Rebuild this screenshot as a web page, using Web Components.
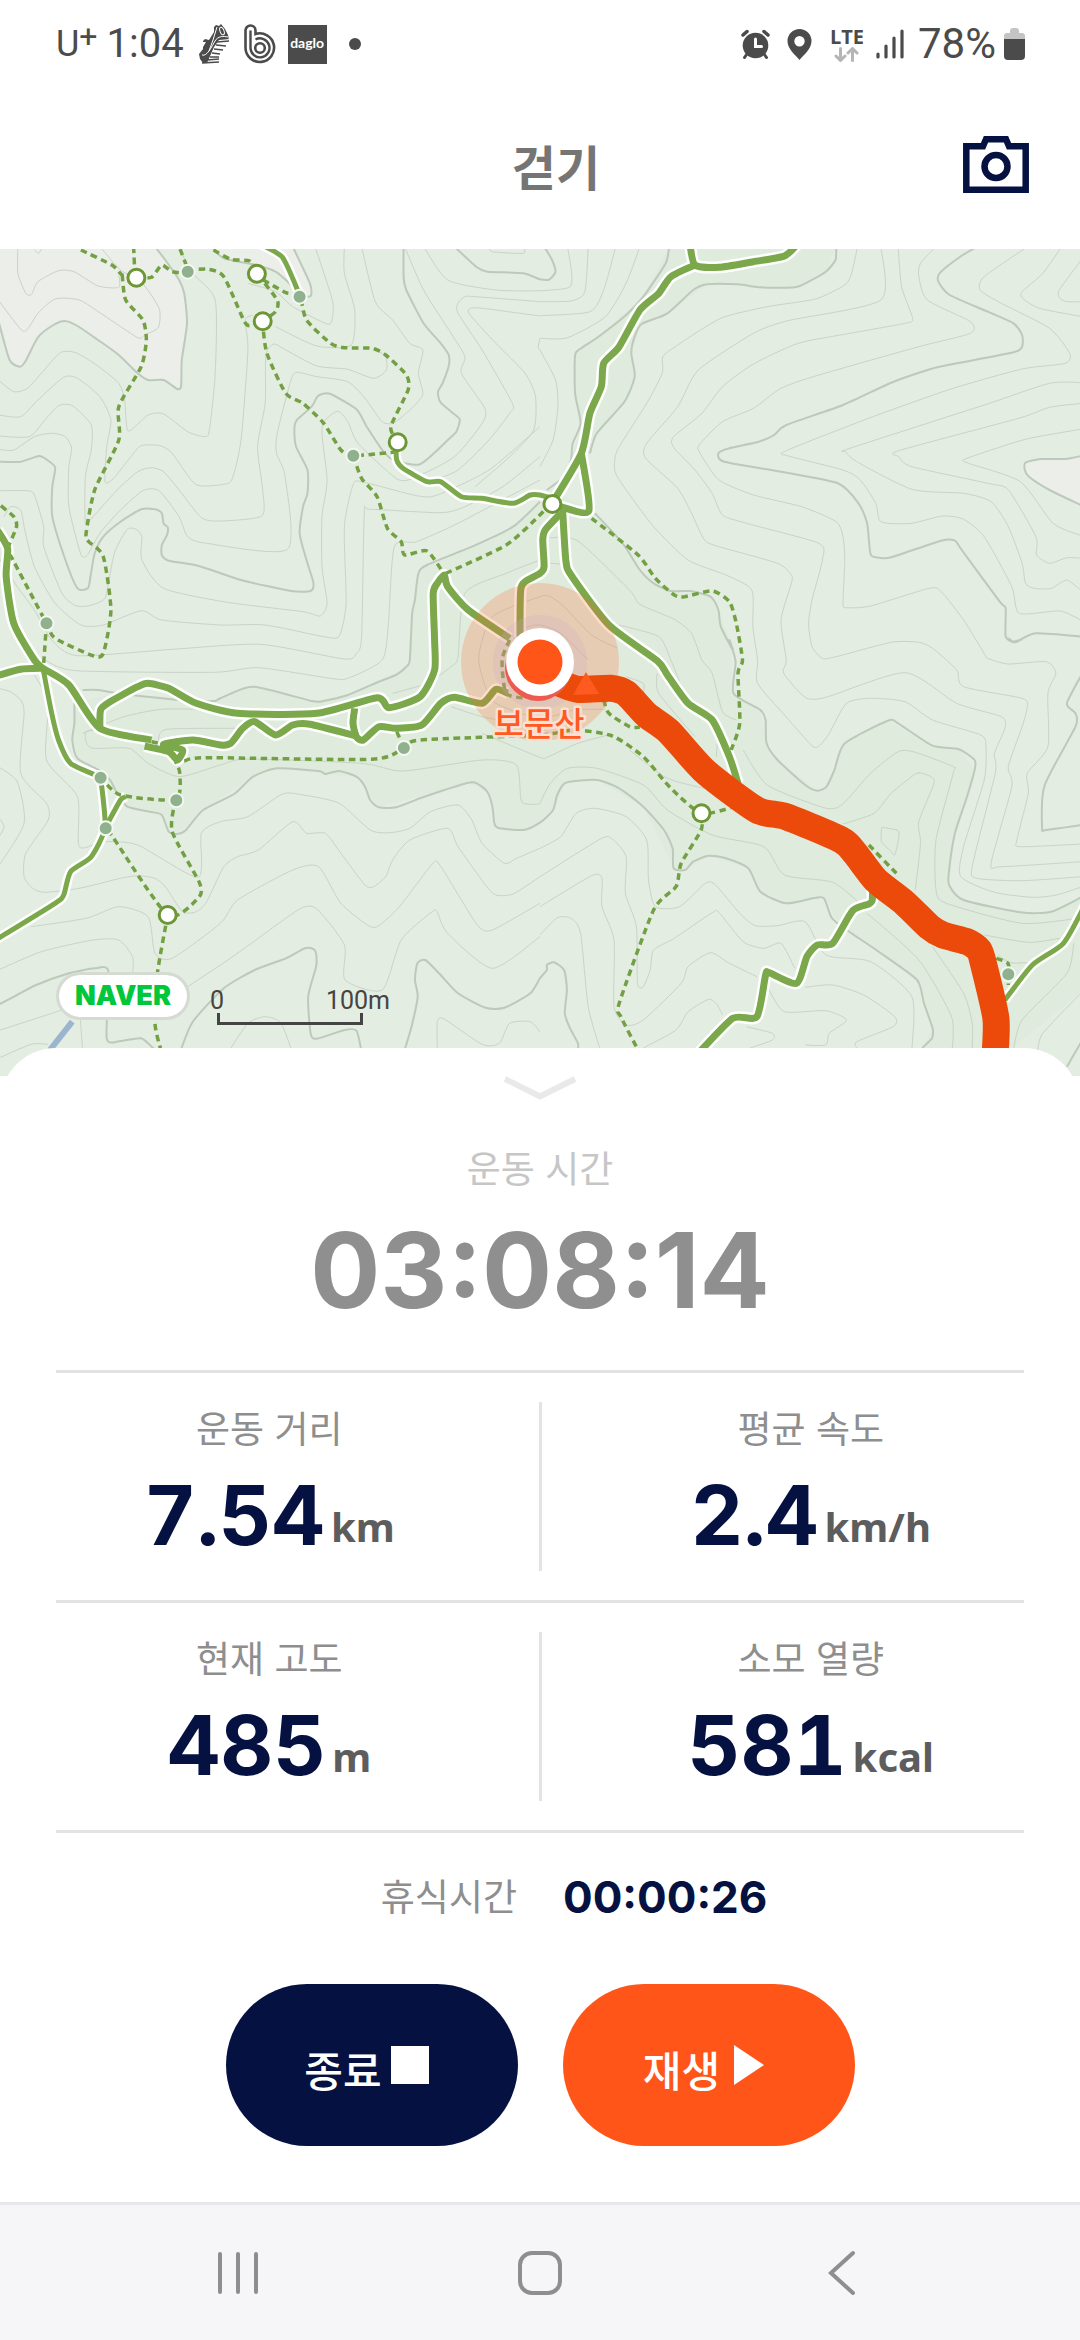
<!DOCTYPE html>
<html lang="ko">
<head>
<meta charset="utf-8">
<meta name="viewport" content="width=device-width, initial-scale=1">
<title>걷기</title>
<style>
  body { margin: 0; background: #fff; font-family: "Noto Sans", "Noto Sans CJK KR", sans-serif; }
</style>
</head>
<body>
<walk-app></walk-app>

<script>
const define = (name, html, setup) => {
  const tpl = document.createElement('template');
  tpl.innerHTML = html;
  customElements.define(name, class extends HTMLElement {
    constructor() {
      super();
      this.attachShadow({ mode: 'open' }).append(tpl.content.cloneNode(true));
    }
    connectedCallback() { if (setup) setup(this, this.shadowRoot); }
  });
};

/* ---------- Status bar ---------- */
define('status-bar', `
<style>
  :host { display: flex; justify-content: space-between; align-items: center; height: 88px;
    padding: 0 55px 0 56px; color: #4b4b4b; font: 400 40px/48px Roboto, sans-serif; }
  .side { display: flex; align-items: center; }
  .carrier { display: flex; align-items: flex-start; font-size: 36px; margin-right: 9px; }
  sup { font-size: 32px; line-height: 32px; }
  svg { display: block; }
  time { margin-right: 15px; }
  .shoe, .b { margin-right: 12px; }
  .daglo { background: #4b4b4b; color: #fff; width: 39px; height: 39px; line-height: 36px; text-align: center;
    font-family: Lato, sans-serif; font-weight: 700; font-size: 14px; }
  .dot { width: 12px; height: 12px; border-radius: 50%; background: #4b4b4b; margin-left: 22px; }
  .alarm, .pin { margin-right: 17px; }
  .net { display: flex; flex-direction: column; align-items: center; margin-right: 12px;
    font: 700 20px/20px "Open Sans", sans-serif; }
  .signal { margin-right: 14px; }
  .level { font-size: 42px; }
  .cell { margin-left: 8px; }
</style>
<div class="side">
  <span class="carrier">U<sup>+</sup></span>
  <time>1:04</time>
  <svg class="shoe" width="33" height="40" viewBox="0 0 33 40" fill="#4b4b4b">
    <path d="M0 30 4 25V17l2-2 4 1 5-8V3l2-2 3 1 2-2 4 5 3 6 1 5-6 6-7 3-4 8-4 6-5 0-3-4z"/>
    <path d="M3 31c5 2 10-9 13-14s8-5 13-4M10 27l4-11L18 3" fill="none" stroke="#fff" stroke-width="1"/>
    <ellipse cx="23" cy="7" rx="2" ry="4" fill="none" stroke="#fff" stroke-width="1" transform="rotate(-20 23 7)"/>
    <path d="M31 15 20 16l-5 7-7 16 12-1V27l7-7z" fill="#fff"/>
    <path d="M18 18l12-1M17 21l10 1M15 25l9 1M13 29l8 1M11 33l9 0M8 36l12-1M3 39l17-1" stroke="#4b4b4b" stroke-width="1.600"/>
    <path d="M4 18v5l3-5z" fill="#fff"/>
  </svg>
  <svg class="b" width="32" height="40" viewBox="0 0 32 40" fill="none" stroke="#4b4b4b">
    <path stroke-width="2.600" d="M1.500 24V6.500a5 5 0 0 1 10 0V10a14.300 14.300 0 1 1-10 14z"/>
    <path stroke-width="2.400" d="M6.500 24V6.500M11.500 15.500A9.500 9.500 0 1 1 6.500 24"/>
    <circle cx="16" cy="24" r="4.800" stroke-width="2.600"/>
  </svg>
  <span class="daglo">daglo</span>
  <i class="dot"></i>
</div>
<div class="side">
  <svg class="alarm" width="29" height="30" viewBox="0 0 29 30" fill="#4b4b4b">
    <circle cx="14.500" cy="16.500" r="12.800"/>
    <path d="M2 6 6 2.500M27 6 23 2.500" stroke="#4b4b4b" stroke-width="3.500" stroke-linecap="round"/>
    <path d="M6 25l-2.500 3.500M23 25l2.500 3.500" stroke="#4b4b4b" stroke-width="3" stroke-linecap="round"/>
    <path d="M14.500 10v7.500h6" fill="none" stroke="#fff" stroke-width="3" stroke-linecap="round"/>
  </svg>
  <svg class="pin" width="26" height="31" viewBox="0 0 26 31">
    <path fill="#4b4b4b" fill-rule="evenodd" d="M12.500 0A12 12 0 0 1 24.500 12c0 8-8 14-12 19C8.500 26 .5 20 .5 12a12 12 0 0 1 12-12zm0 7a5.200 5.200 0 1 0 0 10.400 5.200 5.200 0 0 0 0-10.400z"/>
  </svg>
  <span class="net">LTE
    <svg width="26" height="15" viewBox="0 0 26 15" fill="none" stroke="#b5b5b5" stroke-width="3" stroke-linecap="round" stroke-linejoin="round">
      <path d="M6.500 1.500v12M2 9l4.500 4.500L11 9M18.500 13.500v-12M14 6l4.500-4.500L23 6"/>
    </svg>
  </span>
  <svg class="signal" width="28" height="30" viewBox="0 0 28 30" stroke="#4b4b4b" stroke-width="3.200" stroke-linecap="round">
    <path d="M2 25v3M10 17v11M18 9v19M26 2v26"/>
  </svg>
  <span class="level">78%</span>
  <svg class="cell" width="21" height="32" viewBox="0 0 21 32">
    <path fill="#c4c4c4" d="M0 12V8q0-3 3-3h3V3q0-3 3-3h3q3 0 3 3v2h3q3 0 3 3v4z"/>
    <path fill="#4b4b4b" d="M0 11h21v17q0 4-4 4H4q-4 0-4-4z"/>
  </svg>
</div>`);

/* ---------- App bar ---------- */
define('app-bar', `
<style>
  :host { display: grid; grid-template-columns: 1fr auto 1fr; align-items: center; height: 153px; padding: 0 51px 8px 83px; }
  h1 { margin: 0; grid-column: 2; font: 700 48px/60px "Noto Sans CJK KR", sans-serif; color: #757575; }
  button { justify-self: end; border: 0; padding: 0; background: none; }
  svg { display: block; }
</style>
<h1><slot></slot></h1>
<button type="button" aria-label="사진 촬영">
  <svg width="66" height="57" viewBox="0 0 66 57" fill="none" stroke="#051141">
    <path stroke-width="6.500" d="M3.300 10.300H20l3-7h20l3 7h16.700v43.400H3.300z"/>
    <circle cx="33" cy="30.500" r="11.500" stroke-width="6.500"/>
  </svg>
</button>`);

/* ---------- Trail map ---------- */
/* The survey is stored in four sheets; a letter in a line switches the sheet its points belong to. */
const SHEETS = { A: [0, -9], B: [540, -9], C: [0, 391], D: [540, 391] };
const line = (text) => {
  let origin = SHEETS.A;
  const pts = [];
  for (const t of text.split(' ')) {
    if (SHEETS[t]) { origin = SHEETS[t]; continue; }
    const [x, y] = t.split(',').map(Number);
    pts.push([origin[0] + x / 2.904, origin[1] + y / 3]);
  }
  return pts;
};
const straight = (text) => 'M' + line(text).map(p => p.map(n => n.toFixed(1)).join(' ')).join('L');
const smooth = (text) => {
  const p = line(text);
  let d = `M${p[0][0].toFixed(1)} ${p[0][1].toFixed(1)}`;
  for (let i = 0; i < p.length - 1; i++) {
    const a = p[i - 1] || p[i], b = p[i], c = p[i + 1], e = p[i + 2] || c;
    const k = 9;
    d += 'C' + [b[0] + (c[0] - a[0]) / k, b[1] + (c[1] - a[1]) / k,
                c[0] - (e[0] - b[0]) / k, c[1] - (e[1] - b[1]) / k, c[0], c[1]].map(n => n.toFixed(1)).join(' ');
  }
  return d;
};

const BARE = [
  'A -5,20 -5,240 28,360 58,380 75,362 110,292 155,255 188,243 225,258 285,300 345,345 400,400 430,420 475,420 515,447 526,438 528,360 543,250 535,160 520,120 480,60 450,20',
  'A 615,20 650,55 745,75 800,95 840,130 870,165 902,168 900,130 850,20',
  'B 1580,646 1525,657 1455,657 1410,668 1408,690 1420,710 1480,750 1580,800'
];
const SUMMIT = [
  'A 1568,785 1490,860 1370,920 1240,975 1215,1000 1205,1080 1190,1260 C 1180,80 1100,125 1010,165 905,183 735,140 620,183 340,160 216,190 216,250 210,300 225,355 290,392 370,500 470,525 515,582 590,510 735,410 805,385 945,402 1035,410 1100,502 1360,428 1415,455 1445,563 1520,570 1568,548 D 38,510 75,428 165,420 300,500 388,685 422,690 490,647 605,685 640,755 715,790 825,775 870,855 1095,1020 1140,1165 1110,1224 1370,1224 1568,1060 1568,770 1485,815 1395,817 1230,780 1188,735 1205,580 1262,390 1215,327 1140,317 1010,242 885,310 832,440 805,452 690,360 658,310 640,210 562,160 550,0 B 560,1230 518,1110 495,1070 380,1053 290,990 160,820 40,750',
  'B 375,20 300,170 170,290 102,345 102,460 118,550 90,660 145,640 165,580 245,485 275,410 265,340 295,252 370,220 485,133 740,142 830,95 860,20'
];
const INDEX_CONTOURS = [
  'A -5,240 28,360 58,380 75,362 110,292 155,255 188,243 225,258 285,300 345,345 400,400 430,420 475,420 515,447 526,438 528,360 543,250 535,160 520,120 480,60 450,20',
  'A 615,20 650,55 745,75 800,95 840,130 870,165 902,168 900,130 850,20',
  'A -5,665 60,665 112,648 130,655 160,682 152,740 152,830 190,960 225,1045 255,1045 262,1015 275,940 300,890 350,845 410,808 450,808 470,820 475,850 487,862 485,885 470,915 470,945 490,962 575,977 700,1020 845,1053 902,1053 910,1028 890,960 870,880 880,800 893,760 893,690 860,620 855,565 862,540 905,500 920,472 935,462 960,462 1035,508 1065,560 1110,630 1145,662 1215,674 1260,640 1300,600 1325,575 1335,538 1310,515 1278,485 1272,455 1285,430 1303,378 1303,345 1280,310 1230,250 1180,150 1172,110 1172,20',
  'A 1320,20 1385,82 1415,95 1520,100 1568,118 B 28,118 45,95 35,60 12,20',
  'A 1568,785 1490,860 1370,920 1240,975 1215,1000 1205,1080 1197,1120 1190,1260 C 1180,80 1150,105 1100,125 1010,165 940,183 905,183 735,140 640,175 620,183 520,180 340,160 285,150 240,150',
  'C 216,190 216,250 210,300 225,355 290,392 320,420 340,460 370,500 435,515 470,525 490,575 515,582 540,570 590,510 680,462 735,410 805,385 925,393 945,402 985,393 1035,410 1060,440 1075,480 1100,502 1150,502 1220,475 1290,450 1360,428 1385,430 1415,455 1430,500 1435,545 1445,563 1520,570 1568,548 D 38,510 50,465 75,428 165,420 230,445 300,500 360,570 385,625 388,685 422,690 445,665 490,647 540,655 605,685 640,755 715,790 800,773 825,775 845,830 870,855 905,880 990,940 1095,1020 1115,1090 1140,1165 1138,1195 1110,1224',
  'C 0,1092 50,1065 105,1035 200,1000 275,985 315,995 310,1195 350,1203 410,1195 450,1230',
  'C 525,1230 560,1145 650,1045 740,990 830,955 885,925 910,927 918,940 918,980 895,1070 903,1185 925,1195 1000,1170 1035,1172 1049,1230',
  'C 1175,1230 1195,1160 1213,1070 1205,1020 1212,970 1235,960 1275,1000 1330,1060 1410,1103 1465,1103 1540,1060 1568,1015 D 20,990 20,975 40,967 70,990 78,1050 72,1120 85,1160 110,1210 110,1230',
  'B 375,20 365,70 300,170 250,225 170,290 120,325 102,345 102,460 118,550 95,610 90,660 70,710 20,750',
  'B 860,20 858,60 830,95 780,125 740,142 640,142 575,133 485,133 445,150 370,220 295,252 275,290 265,340 275,410 245,485 165,580 145,640',
  'B 1270,20 1220,50 1162,98 1157,125 1190,165 1300,215 1375,250 1400,285 1400,320 1375,337 1200,372 1135,387 1020,428 880,495 715,555 680,585 635,605 550,625 518,640 535,665 700,695 865,730 925,790 950,850 960,943 985,953 1020,952 1165,902 1205,902 1225,930 1335,1085 1352,1105 1352,1188 1370,1205 1385,1205 1440,1180 1575,1190',
  'B 160,820 240,910 290,990 330,1030 380,1053 435,1053 495,1070 518,1110 525,1160 560,1230 D 550,0 568,65 562,160 640,210 655,240 658,310 690,360 770,435 805,452 832,440 855,390 885,310 1010,242 1040,250 1140,317 1215,327 1262,360 1262,390 1240,470 1205,580 1188,690 1188,735 1230,780 1395,817 1485,815 1575,770',
  'D 1575,100 1530,190 1555,220 1555,260 1465,437 1458,565 1470,570 1575,555',
  'D 1360,-5 1375,5 1400,-2', 'D 1575,1200 1530,1280',
  'B 1580,646 1525,657 1455,657 1410,668 1408,690 1420,710 1480,750 1580,800'
];
const CONTOURS = [
  'A 52,20 52,100 75,160 92,163 110,125 170,92 215,95 285,138 345,142 345,105', 'A 100,30 112,40 122,25',
  'A -5,180 60,268 80,268 110,220 160,177 230,180 300,225 400,293 420,285 460,262 462,205 410,125 350,90 290,20',
  'A -5,420 40,455 80,445 120,400 175,338 220,338 280,375 345,430 362,480 372,573 430,525 475,522 545,575 595,590 608,570 625,400 625,180 560,100 518,20',
  'A -5,525 60,530 110,480 185,412 225,415 290,470 322,540 310,620 305,725 330,715 380,650 410,617 465,617 500,640 568,733 650,733 675,715 700,600 720,330 712,240 735,225',
  'A -5,588 85,590 130,540 170,497 210,497 265,555 265,630 248,710 248,850 270,830 340,750 400,695 440,683 475,695 520,750 585,833 640,843 760,828 763,750 748,620 770,490 772,345 795,312 830,330 920,378 1010,388 1085,415 1122,390 1120,350 1100,335',
  'A -5,628 40,630 100,590 150,580 190,590 208,625 200,680 200,800 235,943 255,943 290,880 350,810 415,752 462,752 520,830 545,890 600,910 835,928 828,710 803,640 805,580 845,420 862,397 920,410 1010,425 1060,475 1110,545 1145,548 1200,500 1228,462 1215,400 1228,330 1190,310 1140,240 1090,185 1050,20',
  'A -5,752 80,752 100,765 127,860 127,920 180,1060 220,1097 260,1097 305,1075 320,1000 335,930 370,868 395,868 412,890 412,960 475,1045 660,1087 880,1115 930,1128 950,1090 935,980 935,830 950,720 935,560 980,514 1010,545 1040,610 1150,715 1200,715 1320,650 1400,550 1408,505 1340,400 1350,350 1310,280 1230,150 1175,20',
  'A 12,830 30,800 60,810 72,870 100,980 160,1090 235,1155 300,1155 410,1112 470,1140 640,1155 770,1155 940,1190 985,1188 1005,1090 1000,860 1025,735 1050,725 1210,767 1270,765 1420,690 1568,560',
  'A -5,950 50,1040 100,1110 150,1200 225,1247 500,1228 755,1213 1000,1257 1035,1240 1050,1190 1058,820 1075,808 1280,818 1350,800 1460,740 1568,650',
  'C 130,60 220,92 620,97 750,83 960,115 1010,115 1110,60 A 1128,1150 1145,920 1210,905 1330,850 1568,720',
  'A 720,130 800,155 850,200 950,252 965,235 965,180 915,20', 'A 800,260 920,318 1020,315 1030,210 1000,100 1000,20',
  'A 1230,20 1300,120 1440,150 1568,152 B 85,142 92,100 80,20',
  'A 1568,185 1380,170 1350,170 1330,190 1330,220 1400,330 1488,490 1480,520 1420,600 1330,690 1260,720',
  'A 1568,228 1510,220 1380,203 1362,220 1440,310 1525,400 1555,470 1550,570 1480,650 1380,740',
  'A 1520,20 1520,40 1430,35 1420,20', 'A 1568,295 1563,320 1568,330',
  'B 0,185 90,183 130,155 140,20', 'B 0,227 145,215 185,150 220,20', 'B 0,295 80,293 190,230 250,130 290,20', 'B 0,330 45,420 52,500 38,600 0,680',
  'B 922,20 905,100 885,135 800,177 660,200 525,235 400,315 357,350 355,400 310,490 225,630 217,690 240,735 330,860 430,960 540,1005 615,1050 618,1160 632,1260 D 632,130 710,225 790,317 812,317 840,280 890,190 960,175 1060,185 1140,240 1280,285 1295,320 1290,420 1230,620 1222,710 1320,757 1430,772 1500,765 1575,740',
  'B 990,20 990,180 720,242 620,280 460,390 400,500 310,610 307,655 400,745 440,820 478,900 520,920 690,970 730,1005 730,1030 700,1140 715,1260 D 708,100 770,172 830,172 1060,98 1210,190 1340,230 1350,265 1320,340 1322,400 1255,680 1270,715 1400,722 1575,710',
  'B 1040,20 1050,140 1082,235 1060,250 900,280 750,310 620,372 530,440 470,520 388,590 388,622 450,690 500,760 530,825 600,850 810,910 820,960 790,1080 780,1150 790,1220 820,1255 860,1250 1020,1207 1100,1207 1140,1225 1210,1290 D 1230,140 1400,175 1415,200 1400,260 1360,380 1370,440 1310,670 1340,680 1575,665',
  'B 1150,20 1105,70 1100,110 1125,180 1250,245 1250,280 1100,320 810,405 700,445 620,505 530,545 462,615 465,640 520,720 620,765 760,800 860,845 880,890 885,960 880,1090 890,1103 960,1098 1130,1045 1165,1055 1230,1140 1290,1240 D 1300,55 1360,72 1470,65 1498,100 1475,160 1475,320 1415,400 1418,460 1385,600 1395,620 1575,612',
  'B 1415,20 1290,110 1278,150 1340,190 1480,265 1538,340 1525,370 1400,387 1200,445 980,525 715,632 722,648 880,690 930,720 975,790 985,840 1010,850 1080,850 1170,828 1230,838 1290,890 1370,1040 1392,1120 1510,1113 1575,1143',
  'B 1515,20 1460,100 1400,155 1402,175 1450,205 1575,230', 'B 1575,55 1508,150 1510,175 1530,185 1575,185',
  'B 1575,428 1480,430 1290,495 900,625 888,635 920,665 1080,748 1230,760 1310,785 1360,860 1400,970 1410,1030 1435,1045 1485,1045 1530,1020 1575,1055',
  'B 1575,490 1480,502 1390,535 1042,632 1042,650 1080,680 1300,730 1360,750 1440,890 1442,945 1480,970 1530,953 1575,955',
  'B 1575,567 1410,598 1240,655 1240,668 1395,725 1490,850 1575,888',
  'B 30,893 110,903 260,1050 290,1093 390,1138 440,1180 470,1260 D 500,100 530,215 570,240', 'B 30,970 60,972',
  'B 230,1155 345,1190 380,1260 D 430,190', 'B 225,1225 150,1185 70,1100 30,1070 0,1070 A 1430,1130 1390,1250 C 1410,140 1440,190 1568,235 D 100,210 190,208',
  'A 1568,960 1470,1000 1350,1060 1330,1250 C 1310,80 1240,130 1140,160', 'B 140,1260 60,1180 0,1155 A 1520,1170 1490,1260',
  'D 340,100 345,160 450,290', 'D 250,110 300,130 300,160', 'D 515,310 512,350',
  'D 590,330 660,435 820,502 865,502 900,470 960,400 1040,335 1090,337 1200,380 1200,400 1150,600 1150,750 1180,790 1400,850 1575,833',
  'D 880,552 970,520 1020,460 1090,402 1115,402 1145,425 1100,545 1105,610 1090,750', 'D 992,562 1040,572 1040,605 1030,645 1020,635 992,605 992,562',
  'D 1290,885 1420,907 1510,895', 'D 1330,945 1365,968 1415,968', 'D 950,820 1100,960 1195,1130 1197,1230', 'D 1140,920 1230,1060 1255,1150 1255,1230',
  'D 0,490 30,430 80,385 165,385 300,435 370,510 500,585 650,620 710,705 850,727 940,800',
  'D 0,625 60,590 105,520 160,505 250,530 310,600 315,720 335,800 405,800 480,730 510,735 580,820 625,857 690,857 770,845 830,945 960,965 1080,1070 1080,1230',
  'D 0,710 175,597 210,597 250,650 248,760 280,860 283,1030 300,1040 320,990 330,930 390,895 500,818 520,818 590,905 650,925 700,910 740,985',
  'D 0,800 150,707 180,715 180,800 215,900 215,1100 250,1155 300,1140 410,1030 430,980 495,938 550,970 630,1010',
  'D 0,885 50,833 90,835 118,880 140,1100 175,1230', 'D 300,1224 395,1170 430,1115 490,1078 515,1095 530,1125',
  'D 665,1050 710,1115 830,1112 890,1140 840,1180 830,1215 770,1215', 'D 770,1042 850,1035 940,1065 1030,1130 1025,1160 920,1205 920,1224',
  'D 600,1160 675,1180 675,1200 610,1224', 'D 1575,1055 1460,1180 1445,1235', 'D 1550,910 1530,1000 1400,1140 1375,1230',
  'C -5,145 30,155 60,180 70,220 60,400 135,490 140,540 75,640 70,710 95,745 130,757 230,745 350,715 400,707 450,715 480,740 530,815 570,815 600,785 650,680 690,650 750,630 850,545 890,580 945,580 990,640 1060,735 1085,740 1120,710 1140,660 1190,600 1300,565 1330,620 1410,735 1440,765 1490,762 1568,710',
  'C 100,105 140,190 135,360 225,470 230,620 300,605 400,615 575,712 585,580 640,545 720,530 820,462 880,465 985,490 1075,570 1130,578 1190,565 1250,515 1330,495 1370,540 1400,610 1465,670 1500,655 1568,625',
  'C -5,380 50,425 70,550 -5,680', 'C -5,530 12,560 -5,595',
  'C 90,860 250,835 345,800 430,830 450,940 500,955 640,850 690,780 850,690 925,680 990,790 1070,857 1100,857 1160,800 1255,672 1275,672 1340,780 1390,860 1430,870 1568,790',
  'C -5,990 120,935 270,900 345,900 385,950 385,1000', 'C 545,1040 640,975 730,910 870,807 920,807 1000,915 1002,1020 1110,1050 1165,900 1255,815 1270,817 1300,880 1430,985 1568,890',
  'C -5,1172 180,1110', 'C -5,1255 90,1213 140,1213', 'C 232,1120 240,1230', 'C 667,1230 720,1150 770,1130 815,1148 847,1230',
  'C 1270,1230 1270,1145 1290,1137 1400,1213 1450,1210 1480,1150 1540,1145 1568,1175',
  'C 240,280 360,230 470,208 600,208', 'C 700,265 485,268 460,300 465,315', 'C 290,270 250,275 250,305 270,325 375,325 430,370 520,410 640,375 720,357 1050,370 1170,393 1400,360 1500,375 1515,485 1568,492',
  'C 1310,200 1400,230 1500,250', 'C 1400,280 1568,352 D 20,352 110,310 210,282', 'D 260,330 370,415 500,450'
];
const ROADS = [
  'A -8,870 22,925 18,1010 40,1150 100,1260 C 125,85 200,135 290,265 440,300', 'C -8,107 60,88 125,85',
  'C 290,265 292,210 315,188 400,140 430,130 490,145 570,190 690,220 920,220 1095,173 1130,203 1220,170 1262,90 1262,0 A 1258,1060 1270,1030 1290,1005 1300,1040 1360,1110 1480,1195',
  'C 1030,205 1025,250 1035,290 1055,300 1100,260 1150,265 1225,255 1280,190 1320,172 1400,190 1440,148 1475,160',
  'C 1035,288 900,253 850,255 800,285 740,245 705,265 670,310 640,315 560,300 475,313 530,330 515,360 490,335 420,318',
  'B 435,10 450,75 520,82 620,65 710,48 750,10', 'B 450,75 380,110 345,160 290,210 230,320 185,370 178,440 145,520 120,640 35,790',
  'B 120,640 142,812 60,800', 'B 60,820 15,870 8,900 12,980 0,1000 A 1525,1025 1512,1050 1510,1190',
  'B 65,800 75,960 90,1005 200,1155 340,1262 D 370,105 430,190 500,240 550,350 575,430',
  'D 965,730 965,780 955,792 908,812 850,910 805,915 775,950 745,1030 665,998 655,1005 630,1130 560,1135 460,1240'
];
const LANES = [
  'C 125,85 150,220 170,300 205,370 290,410', 'C 292,410 305,560 265,650 205,695 185,765 160,790 -8,897', 'C 310,555 350,480 365,470',
  'A 750,10 820,52 870,165', 'A 1150,620 1152,660 1170,685 1240,725 1280,725 1340,770 1400,775 1490,790 1540,765 B 0,765 35,775',
  'D 1350,1080 1430,975 1520,910 1580,800'
];
const PATHS = [
  'A 235,30 325,75 355,105 396,112', 'A 388,20 392,112',
  'A 355,105 365,180 415,240 425,300 410,380 345,500 345,600 275,750 250,880 258,905 300,950 322,1110 300,1240 270,1247 160,1195 135,1150 30,945',
  'A 22,925 48,860 40,830 0,795', 'A 135,1150 127,1270', 'A 396,112 440,112 470,75 500,95 545,95 520,20',
  'A 545,90 605,88 650,110 710,245 730,257 762,243', 'A 620,30 670,58 725,63 746,100 805,180 800,215 762,243',
  'A 765,120 830,158 870,168 890,240 960,310 1000,323 1080,325 1120,345 1180,405 1185,450 1135,560 1155,605',
  'A 762,243 775,340 830,460 880,490 940,550 990,630 1026,647 1155,635', 'A 1026,647 1050,715 1095,770 1125,865 1165,905 1175,945 1240,933 1290,1003',
  'A 1295,1000 1470,915 1568,825 B 30,790', 'B 150,835 285,945 335,1015 390,1065 420,1070 500,1053 550,1085 570,1150 588,1260 D 575,100 580,250 555,330',
  'C 290,410 350,465 510,478 522,400 510,365', 'C 510,478 500,575 580,730 575,775 487,825 330,595 310,565', 'C 487,825 457,1000 450,1150 467,1230',
  'C 535,363 600,353 1080,358 1173,323 1220,300 1568,285 D 100,270 210,288 300,350 380,445 468,520 555,503',
  'D 468,520 468,570 410,670 395,740 330,810 230,1090 235,1130 285,1230', 'C 1173,323 1150,270', 'D 185,180 200,220 260,260 290,262',
  'D 955,615 1035,700', 'D 1325,955 1360,972 1360,1035', 'C 1480,0 1458,60 1470,160 1530,175', 'C 440,305 475,313'
];
const TRACK = 'D 0,80 50,125 110,148 205,145 250,160 310,225 375,275 480,395 630,510 715,530 875,600 915,640 975,720 1060,790 1130,860 1170,885 1240,905 1275,930 1290,980 1324,1135 1322,1240';
const JUNCTIONS = 'A 396,113 746,101 763,244 1155,607 B 36,792 C 487,825 D 469,520';
const SPOTS = 'A 545,95 870,170 1026,647 135,1150 C 1173,324 292,413 512,481 307,565 D 1360,1003';

define('trail-map', `
<style>
  :host { display: block; position: relative; background: #e3ede2; }
  svg { display: block; width: 100%; height: auto; }
  path { fill: none; stroke-linejoin: round; }
  .bare { fill: #ebeee9; }
  .summit { fill: #dfebdd; }
  .thin { stroke: #c9d3c7; stroke-width: 1; }
  .index { stroke: #bdc9bb; stroke-width: 2; }
  .case { stroke: #fff; }
  .road { stroke: #7aa84a; }
  .dash { stroke: #74a044; stroke-width: 3.500; stroke-dasharray: 6.500 4.500; }
  .track { stroke: #eb4a0a; stroke-width: 27; }
  .junction { fill: #fff; stroke: #6d9635; stroke-width: 3; }
  .spot { fill: #8fb18d; stroke: #f2f7f0; stroke-width: 2; }
  text { font: 500 33px "Noto Sans CJK KR", sans-serif; text-anchor: middle; fill: #ff5a22; stroke: #fbe0d3;
    stroke-width: 5; stroke-linejoin: round; paint-order: stroke; }
  .legend { position: absolute; left: 56px; right: 56px; bottom: 51px; display: flex; align-items: flex-end; gap: 20px; }
  .brand { width: 128px; height: 42px; margin-bottom: 5px; border: 3px solid #d5dad3; border-radius: 24px; background: #fff; background-clip: padding-box;
    color: #00c73c; text-align: center; font: 900 27px/42px Inter, sans-serif; }
  .scale { width: 180px; font: 400 25px/20px Roboto, sans-serif; color: #444; }
  .ends { display: flex; justify-content: space-between; }
  .rule { width: 140px; height: 9px; margin: 2px 0 0 7px; border: 3px solid #444; border-top: 0; }
</style>
<svg viewBox="0 0 1080 827" role="img" aria-label="보문산 등산로 지도"></svg>
<div class="legend">
  <span class="brand">NAVER</span>
  <div class="scale">
    <div class="ends"><span>0</span><span>100m</span></div>
    <div class="rule"></div>
  </div>
</div>`, (host, root) => {
  const draw = (list, cls, make, width) => list.map(t =>
    `<path class="${cls}" d="${make(t)}"${width ? ` stroke-width="${width}"` : ''}/>`).join('');
  const dots = (text, cls, r) => line(text).map(([x, y]) => `<circle class="${cls}" cx="${x.toFixed(1)}" cy="${y.toFixed(1)}" r="${r}"/>`).join('');
  root.querySelector('svg').innerHTML =
    draw(SUMMIT, 'summit', straight) + draw(BARE, 'bare', straight) +
    draw(CONTOURS, 'thin', smooth) + draw(INDEX_CONTOURS, 'index', smooth) +
    `<path d="${straight('C 210,1145 145,1230')}" stroke="#9cb5cf" stroke-width="6"/>` +
    draw(ROADS, 'case', smooth, 12) + draw(LANES, 'case', smooth, 10) +
    draw(PATHS, 'dash', smooth) +
    draw(ROADS, 'road', smooth, 7) + draw(LANES, 'road', smooth, 5) +
    dots(JUNCTIONS, 'junction', 8.5) + dots(SPOTS, 'spot', 7) +
    `<circle cx="540" cy="413" r="79" fill="#fa7438" fill-opacity=".26"/>
     <circle cx="540" cy="413" r="47" fill="#c8a8c8" fill-opacity=".22"/>` +
    draw([TRACK], 'track', smooth) +
    `<path d="M586 423L599 445L573 446z" style="fill:#ff5a20"/>
     <circle cx="538" cy="419" r="33" fill="#ec5a50"/>
     <circle cx="540" cy="413" r="34" fill="#fff"/>
     <circle cx="540" cy="413" r="22.500" fill="#ff5519"/>
     <text x="539" y="487">보문산</text>`;
});

/* ---------- Metric ---------- */
define('walk-metric', `
<style>
  :host { display: flex; flex-direction: column; align-items: center; flex: 1; min-width: 0; }
  .label { font: 400 37px/50px "Noto Sans CJK KR", sans-serif; color: #8e8e8e; }
  .row { display: flex; align-items: flex-end; gap: 6px; padding-top: 9px; }
  .value { font: 700 82px/110px Inter, sans-serif; font-variant-numeric: tabular-nums; color: #051141; }
  .unit { font: 700 40px/88px "Noto Sans", sans-serif; color: #5d5d5d; }
</style>
<span class="label"><slot name="label"></slot></span>
<div class="row"><span class="value"><slot></slot></span><span class="unit"><slot name="unit"></slot></span></div>`);

define('metric-row', `
<style>
  :host { display: flex; padding: 29px 0; }
  i { width: 3px; background: #e3e3e3; }
</style>
<slot name="first"></slot><i></i><slot name="second"></slot>`);

/* ---------- Pill button ---------- */
define('pill-button', `
<style>
  :host { display: block; }
  button { display: flex; align-items: center; justify-content: center; width: 292px; height: 162px; border: 0; padding: 0 10px 0 0;
    border-radius: 81px; background: var(--pill, #051141); color: #fff; font: 500 42px/56px "Noto Sans CJK KR", sans-serif; gap: var(--gap, 9px); }
  .icon { display: flex; }
  .text { padding-top: 8px; }
</style>
<button type="button"><span class="text"><slot></slot></span><span class="icon"><slot name="icon"></slot></span></button>`);

/* ---------- Workout sheet ---------- */
define('workout-sheet', `
<style>
  :host { display: flex; flex-direction: column; position: relative; margin-top: -28px; padding: 28px 0 56px;
    background: #fff; border-radius: 56px 56px 0 0; }
  hr { align-self: stretch; height: 3px; margin: 0 56px; border: 0; background: #e3e3e3; }
  .grip { align-self: center; border: 0; padding: 0; background: none; }
  svg { display: block; }
  .clock { display: flex; flex-direction: column; align-items: center; padding: 42px 0 22px; }
  .clock .label { font: 400 37px/50px "Noto Sans CJK KR", sans-serif; color: #c6c6c6; }
  .clock time { font: 700 104px/156px Inter, sans-serif; color: #8f8f8f; }
  .rest { display: grid; grid-template-columns: 1fr 1fr; align-items: start; column-gap: 46px; padding: 34px 0 56px; }
  .rest .label { justify-self: end; font: 400 37px/56px "Noto Sans CJK KR", sans-serif; color: #8e8e8e; }
  .rest time { font: 700 44px/61px Inter, sans-serif; color: #051141; }
  .actions { display: flex; justify-content: center; gap: 45px; }
  .play { --pill: #ff5519; --gap: 14px; }
</style>
<button class="grip" type="button" aria-label="접기">
  <svg width="74" height="24" viewBox="0 0 74 24"><path d="M2 3l35 17.500L72 3" fill="none" stroke="#e9e9e9" stroke-width="6"/></svg>
</button>
<div class="clock"><span class="label">운동 시간</span><time>03:08:14</time></div>
<hr>
<metric-row>
  <walk-metric slot="first"><span slot="label">운동 거리</span>7.54<span slot="unit">km</span></walk-metric>
  <walk-metric slot="second"><span slot="label">평균 속도</span>2.4<span slot="unit">km/h</span></walk-metric>
</metric-row>
<hr>
<metric-row>
  <walk-metric slot="first"><span slot="label">현재 고도</span>485<span slot="unit">m</span></walk-metric>
  <walk-metric slot="second"><span slot="label">소모 열량</span>581<span slot="unit">kcal</span></walk-metric>
</metric-row>
<hr>
<div class="rest"><span class="label">휴식시간</span><time>00:00:26</time></div>
<div class="actions">
  <pill-button>종료<svg slot="icon" width="38" height="38"><path fill="#fff" d="M0 0h38v38H0z"/></svg></pill-button>
  <pill-button class="play">재생<svg slot="icon" width="30" height="40"><path fill="#fff" d="M0 0l30 20L0 40z"/></svg></pill-button>
</div>`);

/* ---------- System navigation ---------- */
define('system-nav', `
<style>
  :host { display: flex; justify-content: center; height: 135px; margin-top: auto; border-top: 3px solid #e8e8ea; background: #f6f6f8; }
  button { width: 28%; border: 0; padding: 0; background: none; display: flex; align-items: center; justify-content: center; }
  svg { display: block; }
</style>
<button type="button" aria-label="최근 앱"><svg width="42" height="44" viewBox="0 0 42 44" stroke="#8e8e8e" stroke-width="4" stroke-linecap="round"><path d="M3 3v38M21 3v38M39 3v38"/></svg></button>
<button type="button" aria-label="홈"><svg width="44" height="44" viewBox="0 0 44 44" fill="none" stroke="#8e8e8e" stroke-width="4"><rect x="2" y="2" width="40" height="40" rx="12"/></svg></button>
<button type="button" aria-label="뒤로"><svg width="28" height="46" viewBox="0 0 28 46" fill="none" stroke="#8e8e8e" stroke-width="4" stroke-linecap="round"><path d="M25 3L3 23l22 20"/></svg></button>`);

define('walk-app', `
<style>
  :host { display: flex; flex-direction: column; min-height: 100vh; }
</style>
<status-bar></status-bar>
<app-bar>걷기</app-bar>
<trail-map></trail-map>
<workout-sheet></workout-sheet>
<system-nav></system-nav>`);
</script>
</body>
</html>
